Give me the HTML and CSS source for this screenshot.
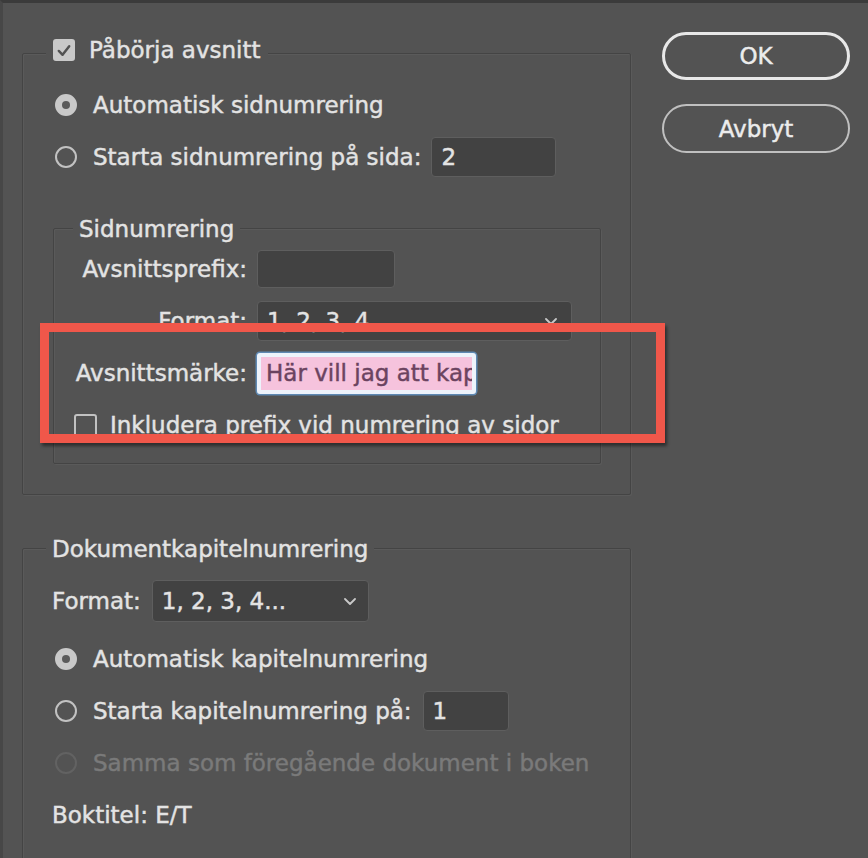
FILE: index.html
```html
<!DOCTYPE html>
<html lang="sv">
<head>
<meta charset="utf-8">
<title>Numrering och avsnittsalternativ</title>
<link rel="stylesheet" href="styles.css">
</head>
<body>
<div class="window">
  <div class="main">
    <section class="group group-section">
      <div class="legend legend-check">
        <span class="checkbox checked"><svg class="check" viewBox="0 0 19 19" width="19" height="19"><polyline points="4,10 8,14 15,5" /></svg></span>
        <span>Påbörja avsnitt</span>
      </div>
      <div class="row radio-row"><span class="radio on"></span><span>Automatisk sidnumrering</span></div>
      <div class="row radio-row"><span class="radio"></span><span>Starta sidnumrering på sida:</span><span class="field field-page">2</span></div>

      <section class="group group-pages">
        <div class="legend">Sidnumrering</div>
        <div class="form-grid">
          <span class="label">Avsnittsprefix:</span>
          <span class="field field-prefix"></span>
          <span class="label">Format:</span>
          <span class="field select select-wide"><span>1, 2, 3, 4...</span><svg class="chev" viewBox="0 0 12 7" width="12" height="7"><polyline points="1,1 6,6 11,1" /></svg></span>
          <span class="label">Avsnittsmärke:</span>
          <span class="field field-marker">Här vill jag att kapitel</span>
          <div class="row check-row"><span class="checkbox"></span><span>Inkludera prefix vid numrering av sidor</span></div>
        </div>
      </section>
    </section>

    <section class="group group-doc">
      <div class="legend">Dokumentkapitelnumrering</div>
      <div class="doc-body">
        <div class="row doc-format"><span>Format:</span><span class="field select select-doc"><span>1, 2, 3, 4...</span><svg class="chev" viewBox="0 0 12 7" width="12" height="7"><polyline points="1,1 6,6 11,1" /></svg></span></div>
        <div class="row radio-row first"><span class="radio on"></span><span>Automatisk kapitelnumrering</span></div>
        <div class="row radio-row"><span class="radio"></span><span>Starta kapitelnumrering på:</span><span class="field field-chapter">1</span></div>
        <div class="row radio-row disabled"><span class="radio"></span><span>Samma som föregående dokument i boken</span></div>
        <div class="row">Boktitel: E/T</div>
      </div>
    </section>
  </div>

  <div class="side">
    <button class="btn btn-default">OK</button>
    <button class="btn btn-cancel">Avbryt</button>
  </div>
</div>
<div class="highlight"></div>
</body>
</html>
```

FILE: styles.css
```css
html, body {
  margin: 0;
  padding: 0;
}

body {
  background: #535353;
  font-family: "DejaVu Sans", "Verdana", sans-serif;
  font-size: 23px;
  color: #e3e3e3;
  width: 868px;
  height: 858px;
  overflow: hidden;
  -webkit-text-stroke: 0.45px currentColor;
}

.window {
  display: flex;
  height: 858px;
  box-sizing: border-box;
  border-top: 3px solid #3b3b3b;
  border-left: 3px solid #474747;
  padding-left: 19px;
  overflow: hidden;
}

.main {
  width: 609px;
  flex: none;
  padding-top: 50px;
}

.group {
  border: 1px solid #444444;
  border-radius: 2px;
  box-shadow: inset 1px 1px 0 #5a5a5a, 1px 1px 0 #5a5a5a;
}

.legend {
  display: flex;
  align-items: center;
  width: max-content;
  height: 24px;
  line-height: 24px;
  padding: 0 6px;
  background: #535353;
  white-space: nowrap;
}

.legend-check {
  gap: 14px;
  padding: 0 7px;
  margin: -16px 0 17px 23px;
}

.row {
  display: flex;
  align-items: center;
  height: 52px;
  line-height: 24px;
  white-space: nowrap;
}

.group-section > .radio-row {
  padding-left: 32px;
}

.radio {
  flex: none;
  width: 22px;
  height: 22px;
  box-sizing: border-box;
  border: 2px solid #c2c2c2;
  border-radius: 50%;
  margin-right: 16px;
  display: flex;
  align-items: center;
  justify-content: center;
}

.radio.on {
  background: #c9c9c9;
  border-color: #c9c9c9;
}

.radio.on::after {
  content: "";
  width: 8px;
  height: 8px;
  border-radius: 50%;
  background: #5b5b5b;
}

.disabled {
  color: #7a7a7a;
}

.disabled .radio {
  border-color: #626262;
}

.checkbox {
  flex: none;
  width: 23px;
  height: 23px;
  box-sizing: border-box;
  border: 2px solid #c2c2c2;
  border-radius: 3px;
  display: flex;
  align-items: center;
  justify-content: center;
}

.checkbox.checked {
  width: 22px;
  height: 22px;
  background: #c9c9c9;
  border-color: #c9c9c9;
}

.check polyline {
  fill: none;
  stroke: #525252;
  stroke-width: 2.6;
  stroke-linecap: round;
  stroke-linejoin: round;
}

.field {
  box-sizing: border-box;
  height: 40px;
  display: flex;
  align-items: center;
  padding-left: 9px;
  background: #424242;
  border: 1px solid #5e5e5e;
  border-radius: 4px;
  flex: none;
}

.field-page {
  width: 125px;
  margin-left: 10px;
}

.field-chapter {
  width: 86px;
  margin-left: 11px;
}

.select {
  justify-content: space-between;
  padding-right: 14px;
}

.chev polyline {
  fill: none;
  stroke: #c8c8c8;
  stroke-width: 1.8;
  stroke-linecap: round;
  stroke-linejoin: round;
}

.group-pages {
  margin: 45px 29px 30px 30px;
  padding-bottom: 12px;
}

.group-pages > .legend {
  margin: -12px 0 2px 19px;
}

.form-grid {
  display: grid;
  grid-template-columns: 174px auto;
  grid-auto-rows: 52px;
  column-gap: 10px;
  align-items: center;
  justify-items: start;
  margin-left: 19px;
}

.label {
  justify-self: end;
  white-space: nowrap;
  line-height: 24px;
}

.field-prefix {
  width: 138px;
  height: 38px;
}

.select-wide {
  width: 315px;
}

.field-marker {
  width: 219px;
  height: 41px;
  padding-left: 5px;
  background: #f6c3dd;
  border: 4px solid #edf3fb;
  border-radius: 3px;
  box-shadow: 0 0 0 1.5px #5f89b3;
  color: #6b4360;
  -webkit-text-stroke: 0.45px #6b4360;
  overflow: hidden;
  white-space: nowrap;
}

.check-row {
  grid-column: 1 / -1;
  margin-left: 1px;
}

.check-row .checkbox {
  margin-right: 13px;
}

.group-doc {
  margin-top: 53px;
  padding-bottom: 20px;
}

.group-doc > .legend {
  margin: -12px 0 14px 23px;
}

.doc-body {
  padding-left: 29px;
}

.doc-format {
  height: 52px;
}

.select-doc {
  width: 217px;
  height: 42px;
  margin-left: 11px;
  padding-right: 12px;
}

.doc-body .radio-row {
  padding-left: 3px;
}

.doc-body .radio-row.first {
  margin-top: 6px;
}

.side {
  flex: none;
  margin-left: 31px;
  padding-top: 29px;
  display: flex;
  flex-direction: column;
  gap: 24px;
}

.btn {
  width: 188px;
  height: 49px;
  border-radius: 25px;
  border: 2px solid #c0c0c0;
  background: transparent;
  color: #ececec;
  font: inherit;
  -webkit-text-stroke: 0.45px currentColor;
  padding: 0;
}

.btn-default {
  height: 48px;
  border: 3px solid #e8e8e8;
}

.highlight {
  position: absolute;
  left: 40px;
  top: 323px;
  width: 625px;
  height: 120px;
  box-sizing: border-box;
  border: 9px solid #f0574a;
  box-shadow: 2px 3px 3px rgba(0, 0, 0, 0.45);
}
```
